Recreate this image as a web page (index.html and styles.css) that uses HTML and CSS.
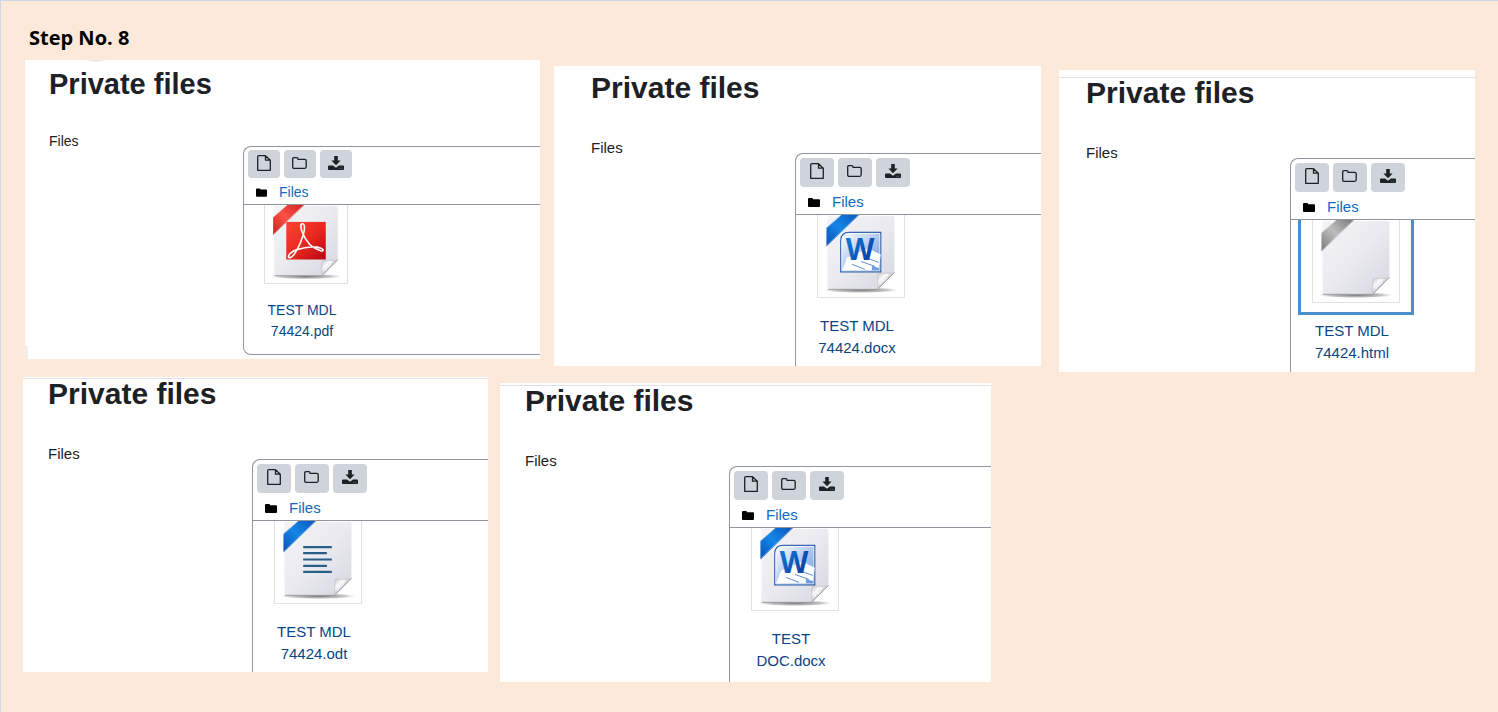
FILE: index.html
```
<!DOCTYPE html>
<html lang="en">
<head>
  <meta charset="utf-8">
  <title>Step No. 8</title>
  <link rel="stylesheet" href="styles.css">
</head>
<body>
  <!-- Shared icons -->
  <svg class="sprite" aria-hidden="true">
    <defs>
      <linearGradient id="paper" x1="0" y1="0" x2="1" y2="1">
        <stop offset="0" stop-color="#f4f4f7"/><stop offset="0.5" stop-color="#eaeaf0"/><stop offset="1" stop-color="#d6d6e0"/>
      </linearGradient>
      <linearGradient id="fold" x1="0" y1="0" x2="1" y2="1">
        <stop offset="0" stop-color="#c9c9d0"/><stop offset="0.3" stop-color="#fafafa"/><stop offset="0.45" stop-color="#d5d5db"/><stop offset="0.55" stop-color="#9a9a9f"/>
      </linearGradient>
      <linearGradient id="blue" x1="0" y1="1" x2="1" y2="0">
        <stop offset="0" stop-color="#0a50b4"/><stop offset="0.5" stop-color="#1486e8"/><stop offset="1" stop-color="#0a55bb"/>
      </linearGradient>
      <linearGradient id="red" x1="0" y1="1" x2="1" y2="0">
        <stop offset="0" stop-color="#c8201c"/><stop offset="0.5" stop-color="#fb5048"/><stop offset="1" stop-color="#d02420"/>
      </linearGradient>
      <linearGradient id="grey" x1="0" y1="1" x2="1" y2="0">
        <stop offset="0" stop-color="#777"/><stop offset="0.5" stop-color="#bdbdbd"/><stop offset="1" stop-color="#777"/>
      </linearGradient>
      <linearGradient id="acrobat" x1="0" y1="0" x2="1" y2="1">
        <stop offset="0" stop-color="#fb4434"/><stop offset="0.5" stop-color="#ea2a20"/><stop offset="1" stop-color="#b80412"/>
      </linearGradient>
      <linearGradient id="word" x1="0" y1="0" x2="1" y2="1">
        <stop offset="0" stop-color="#ffffff"/><stop offset="0.4" stop-color="#c3d6f2"/><stop offset="1" stop-color="#5c8fd8"/>
      </linearGradient>
      <linearGradient id="letter" x1="0" y1="0" x2="1" y2="1">
        <stop offset="0" stop-color="#1583dd"/><stop offset="1" stop-color="#072f9a"/>
      </linearGradient>
      <radialGradient id="shade">
        <stop offset="0" stop-color="#555" stop-opacity="0.8"/><stop offset="0.7" stop-color="#888" stop-opacity="0.5"/><stop offset="1" stop-color="#aaa" stop-opacity="0"/>
      </radialGradient>
    </defs>

    <symbol id="i-file" viewBox="0 0 14 16">
      <path d="M1.7.7H8.5L13.3 5.200V15.300H.7V1.700Q.7.7 1.700.7ZM8.500.7V5.200H13.300" fill="none" stroke="#1d2125" stroke-width="1.3" stroke-linejoin="round"/>
    </symbol>
    <symbol id="i-folder" viewBox="0 0 15 12">
      <path d="M.7 2Q.7.7 2 .7H4.800Q6 .7 6 2V2.400H12.700Q14.200 2.400 14.200 3.800V9.800Q14.200 11.300 12.700 11.300H2.200Q.7 11.300 .7 9.800Z" fill="none" stroke="#1d2125" stroke-width="1.3" stroke-linejoin="round"/>
    </symbol>
    <symbol id="i-download" viewBox="0 0 16 14">
      <path d="M6.200 0H9.800V4.600H12.600L8 9.200L3.400 4.600H6.200Z" fill="#1d2125"/>
      <path d="M1 9.500H5L8 11.700L11 9.500H15Q16 9.500 16 10.500V13Q16 14 15 14H1Q0 14 0 13V10.500Q0 9.500 1 9.500Z" fill="#1d2125"/>
      <path d="M11.500 12.300H12.200M13.500 12.300H14.200" stroke="#cfd4da" stroke-width="0.700"/>
    </symbol>
    <symbol id="i-path" viewBox="0 0 12 9">
      <path d="M0 1Q0 0 1 0H4Q5 0 5 1V1.300H11Q12 1.300 12 2.300V8Q12 9 11 9H1Q0 9 0 8Z" fill="#000"/>
    </symbol>

    <!-- Sheet of paper with a folded corner -->
    <symbol id="sheet" viewBox="0 0 86 83">
      <ellipse cx="43" cy="76" rx="38" ry="3" fill="url(#shade)"/>
      <path d="M11 1H75Q77 1 77 3V58L60 75H11Q9 75 9 73V3Q9 1 11 1Z" fill="url(#paper)" stroke="#f8f8fa" stroke-width="0.600"/>
      <path d="M9.500 75.200H60L77 58" fill="none" stroke="#85858c" stroke-width="0.800"/>
      <path d="M60 75V61Q60 59 62 59H76Q69 66 60 75Z" fill="url(#fold)" stroke="#b4b4ba" stroke-width="0.500"/>
      <path d="M63 70Q66 65 66 61M66 67Q69 64 70 60" fill="none" stroke="#fff" stroke-width="1"/>
    </symbol>
    <symbol id="band" viewBox="0 0 86 83">
      <path d="M8 13L23 0H41L8 32Z"/>
      <path d="M8 13.500L23 .3M8 31L40 0" fill="none" stroke="#fff" stroke-opacity="0.350" stroke-width="0.800"/>
    </symbol>

    <symbol id="t-pdf" viewBox="0 0 86 83">
      <use href="#sheet"/>
      <use href="#band" fill="url(#red)"/>
      <rect x="22" y="18" width="42" height="40" fill="url(#acrobat)"/>
      <path d="M39 20C42 20 42 26 40 32C37 42 30 57 25 56C23 55 26 49 35 47C44 44 54 44 59 46C63 48 61 50 57 48C50 46 43 39 39 29C37 24 37 20 39 20Z" fill="none" stroke="#fff" stroke-width="1.700"/>
    </symbol>
    <symbol id="t-word" viewBox="0 0 86 83">
      <use href="#sheet"/>
      <use href="#band" fill="url(#blue)"/>
      <path d="M31 17.500H63V57.500H22.500V26Q22.500 17.500 31 17.500Z" fill="url(#word)" stroke="#2c5ea8" stroke-width="1.200"/>
      <path d="M31 18.600H62V56.500H23.600V26Q23.600 18.600 31 18.600Z" fill="none" stroke="#fff" stroke-opacity="0.700" stroke-width="1"/>
      <path d="M24 56L29 43L50 34L63 40L61 54L54 51V56Z" fill="#fff"/>
      <path d="M50 44L61 48M43 47L57 52M34 50L47 55" stroke="#5f8fd6" stroke-width="1"/>
    </symbol>
    <symbol id="t-text" viewBox="0 0 86 83">
      <use href="#sheet"/>
      <use href="#band" fill="url(#blue)"/>
      <path d="M28 26.500H57M28 32.500H52M28 39H57M28 45.500H52M28 51.500H57" stroke="#2c5f88" stroke-width="2.200"/>
    </symbol>
    <symbol id="t-blank" viewBox="0 0 86 83">
      <use href="#sheet"/>
      <use href="#band" fill="url(#grey)"/>
    </symbol>
  </svg>

  <h1>Step No. 8</h1>

  <div class="row">
    <section class="panel pdf">
      <div class="page">
        <h2>Private files</h2>
        <div class="field">
          <div class="label">Files</div>
          <div class="manager closed">
            <div class="toolbar">
              <button type="button" aria-label="Add"><svg class="i-file"><use href="#i-file"/></svg></button>
              <button type="button" aria-label="Create folder"><svg class="i-folder"><use href="#i-folder"/></svg></button>
              <button type="button" aria-label="Download all"><svg class="i-download"><use href="#i-download"/></svg></button>
            </div>
            <div class="path"><svg><use href="#i-path"/></svg><a href="#">Files</a></div>
            <div class="thumb"><svg><use href="#t-pdf"/></svg></div>
            <a class="name" href="#">TEST MDL 74424.pdf</a>
          </div>
        </div>
      </div>
    </section>

    <section class="panel docx">
      <div class="page">
        <h2>Private files</h2>
        <div class="field">
          <div class="label">Files</div>
          <div class="manager">
            <div class="toolbar">
              <button type="button" aria-label="Add"><svg class="i-file"><use href="#i-file"/></svg></button>
              <button type="button" aria-label="Create folder"><svg class="i-folder"><use href="#i-folder"/></svg></button>
              <button type="button" aria-label="Download all"><svg class="i-download"><use href="#i-download"/></svg></button>
            </div>
            <div class="path"><svg><use href="#i-path"/></svg><a href="#">Files</a></div>
            <div class="thumb"><svg viewBox="0 0 86 83"><use href="#t-word"/><text x="42" y="46" class="word-letter">W</text></svg></div>
            <a class="name" href="#">TEST MDL 74424.docx</a>
          </div>
        </div>
      </div>
    </section>

    <section class="panel html">
      <div class="page ruled">
        <h2>Private files</h2>
        <div class="field">
          <div class="label">Files</div>
          <div class="manager">
            <div class="toolbar">
              <button type="button" aria-label="Add"><svg class="i-file"><use href="#i-file"/></svg></button>
              <button type="button" aria-label="Create folder"><svg class="i-folder"><use href="#i-folder"/></svg></button>
              <button type="button" aria-label="Download all"><svg class="i-download"><use href="#i-download"/></svg></button>
            </div>
            <div class="path"><svg><use href="#i-path"/></svg><a href="#">Files</a></div>
            <div class="thumb selected"><svg><use href="#t-blank"/></svg></div>
            <a class="name" href="#">TEST MDL 74424.html</a>
          </div>
        </div>
      </div>
    </section>
  </div>

  <div class="row second">
    <section class="panel odt">
      <div class="page ruled">
        <h2>Private files</h2>
        <div class="field">
          <div class="label">Files</div>
          <div class="manager">
            <div class="toolbar">
              <button type="button" aria-label="Add"><svg class="i-file"><use href="#i-file"/></svg></button>
              <button type="button" aria-label="Create folder"><svg class="i-folder"><use href="#i-folder"/></svg></button>
              <button type="button" aria-label="Download all"><svg class="i-download"><use href="#i-download"/></svg></button>
            </div>
            <div class="path"><svg><use href="#i-path"/></svg><a href="#">Files</a></div>
            <div class="thumb"><svg><use href="#t-text"/></svg></div>
            <a class="name" href="#">TEST MDL 74424.odt</a>
          </div>
        </div>
      </div>
    </section>

    <section class="panel doc">
      <div class="page ruled">
        <h2>Private files</h2>
        <div class="field">
          <div class="label">Files</div>
          <div class="manager">
            <div class="toolbar">
              <button type="button" aria-label="Add"><svg class="i-file"><use href="#i-file"/></svg></button>
              <button type="button" aria-label="Create folder"><svg class="i-folder"><use href="#i-folder"/></svg></button>
              <button type="button" aria-label="Download all"><svg class="i-download"><use href="#i-download"/></svg></button>
            </div>
            <div class="path"><svg><use href="#i-path"/></svg><a href="#">Files</a></div>
            <div class="thumb"><svg viewBox="0 0 86 83"><use href="#t-word"/><text x="42" y="46" class="word-letter">W</text></svg></div>
            <a class="name" href="#">TEST DOC.docx</a>
          </div>
        </div>
      </div>
    </section>
  </div>
</body>
</html>
```

FILE: styles.css
```
* {
  box-sizing: border-box;
}
body {
  margin: 0;
  min-height: 100vh;
  border-top: 1px solid #cdd6e6;
  border-left: 1px solid #cdd6e6;
  background-color: #fce9da;
  color: #1d2125;
  font-family: "Liberation Sans", Arial, sans-serif;
  font-size: 15px;
  line-height: 22px;
}
svg {
  display: block;
}
a {
  color: #0f6cbf;
  text-decoration: none;
}
.sprite {
  width: 0;
  height: 0;
}
h1 {
  margin: 0;
  padding: 25px 28px 10px;
  color: #000;
  font-family: "Open Sans", "Noto Sans", sans-serif;
  font-size: 20px;
  line-height: 24px;
}

/* Rows of captures */
.row {
  display: flex;
  align-items: flex-start;
  padding: 0 23px 0 24px;
}
.row.second {
  margin-top: 5px;
  padding-left: 22px;
}
.row.second::after {
  content: "";
  flex: 484 1 0;
}
.panel {
  position: relative;
  background-color: #fff;
  overflow: hidden;
}
.pdf {
  flex: 515 1 0;
  padding-top: 9px;
  padding-bottom: 4px;
}
.docx {
  flex: 487 1 0;
  margin: 6px 18px 0 14px;
  padding-top: 7px;
}
.html {
  flex: 416 1 0;
  margin-top: 10px;
  padding-top: 7px;
}
.odt {
  flex: 465 1 0;
  margin-right: 12px;
  padding-top: 1px;
}
.doc {
  flex: 491 1 0;
  margin-top: 6px;
  padding-top: 2px;
}

/* Leftovers of the page around the first capture */
.pdf::before {
  content: "";
  position: absolute;
  top: -46px;
  left: 47px;
  width: 48px;
  height: 48px;
  border-radius: 50%;
  background-color: #e9eaee;
}
.pdf::after {
  content: "";
  position: absolute;
  bottom: 0;
  left: 0;
  width: 3px;
  height: 14px;
  border-top-right-radius: 3px;
  background-color: #eeeeee;
}

.page {
  padding-left: 25px;
}
.pdf .page {
  padding-left: 24px;
}
.docx .page {
  padding-left: 37px;
}
.html .page {
  padding-left: 27px;
}
.ruled {
  border-top: 1px solid #dee2e6;
}
h2 {
  margin: 0 0 34px;
  font-size: 30px;
  line-height: 30px;
}
.field {
  display: flex;
  align-items: flex-start;
}
.label {
  flex: 0 0 204px;
}

/* File manager */
.manager {
  flex: 1;
  margin-top: 16px;
  padding-bottom: 7px;
  border: 1px solid #8f959e;
  border-right: 0;
  border-bottom: 0;
  border-top-left-radius: 8px;
}
.html .manager {
  padding-bottom: 8px;
}
.doc .manager {
  padding-bottom: 10px;
}
.toolbar {
  display: flex;
  gap: 4px;
  padding: 4px 4px 0;
}
.toolbar button {
  display: flex;
  justify-content: center;
  width: 34px;
  height: 29px;
  padding: 5px 1px 0 0;
  border: 0;
  border-radius: 4px;
  background-color: #ced4da;
}
.i-file {
  width: 14px;
  height: 16px;
}
.i-folder {
  width: 15px;
  height: 12px;
  margin-top: 2px;
}
.i-download {
  width: 16px;
  height: 14px;
  margin-top: 1px;
}
.path {
  display: flex;
  align-items: center;
  gap: 12px;
  height: 28px;
  padding: 3px 0 0 12px;
  border-bottom: 1px solid #8f959e;
}
.path svg {
  width: 12px;
  height: 9px;
}
.thumb {
  width: 116px;
  margin-left: 7px;
  padding: 0 11px 9px;
  border: 3px solid transparent;
  border-top: 0;
}
.thumb svg {
  width: 88px;
  height: 83px;
  border: 1px solid #dee2e6;
  border-top: 0;
}
.selected {
  border-color: #4a90cf;
}
.name {
  display: block;
  width: 88px;
  margin: 5px 0 0 17px;
  color: #0a4584;
  text-align: center;
}
.word-letter {
  fill: url(#letter);
  font-family: "Noto Sans", sans-serif;
  font-size: 30px;
  font-weight: bold;
  text-anchor: middle;
}

/* The first capture is a little smaller */
.pdf {
  font-size: 14px;
  line-height: 21px;
}
.pdf h2 {
  margin-bottom: 32px;
  font-size: 29px;
}
.pdf .label {
  flex-basis: 194px;
}
.pdf .manager {
  margin-top: 15px;
  padding-bottom: 12px;
}
.pdf .toolbar {
  padding-top: 3px;
}
.pdf .toolbar button {
  width: 32px;
  height: 28px;
}
.pdf .path {
  height: 27px;
  padding-top: 2px;
}
.pdf .path svg {
  width: 11px;
}
.pdf .thumb {
  padding: 0 10px 8px;
}
.pdf .thumb svg {
  width: 84px;
  height: 79px;
}
.pdf .name {
  width: 82px;
}
.closed {
  border-bottom: 1px solid #8f959e;
  border-bottom-left-radius: 8px;
}
```
